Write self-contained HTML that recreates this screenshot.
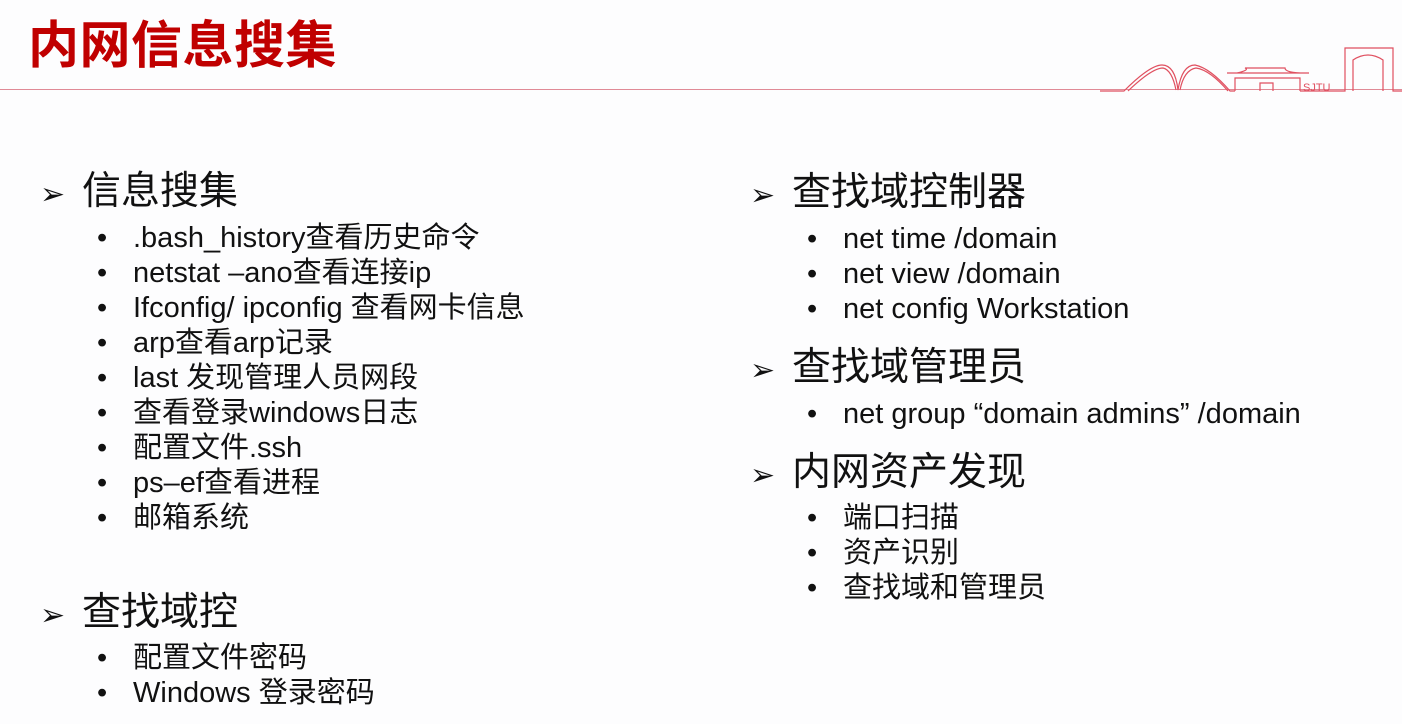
<!DOCTYPE html>
<html><head><meta charset="utf-8"><style>
body{margin:0;width:1402px;height:724px;background:#fdfdfe;position:relative;overflow:hidden;font-family:"Liberation Sans","Noto Sans CJK SC",sans-serif;color:#111}
.t{position:absolute;left:28px;top:4px;font-size:51px;font-weight:bold;color:#c00000;letter-spacing:0.5px;font-family:"Noto Sans CJK SC",sans-serif}
.hl{position:absolute;left:0;top:89px;width:1402px;height:1px;background:#e08a96}
.h{position:absolute;font-size:39px;line-height:44px;white-space:nowrap}
.h span{font-size:30px;display:inline-block;width:42px;font-family:"DejaVu Sans",sans-serif;font-weight:bold}
.i{position:absolute;font-size:29px;line-height:32px;white-space:nowrap}
.i b{position:absolute;left:-36px;font-weight:normal}
</style></head><body>
<div class="t">内网信息搜集</div>
<div class="hl"></div>
<svg style="position:absolute;left:1100px;top:30px" width="302" height="64" fill="none" stroke="#e05060" stroke-width="1.2">
<path d="M0 61H24Q50 35 62 35Q75 35 78 60Q82 35 95 35Q110 38 130 61H135"/>
<path d="M28 61Q52 38 63 38Q72 40 76 60M80 60Q84 40 96 38Q110 40 128 61"/>
<path d="M127 43H209M135 61V48H200V61M137 43Q150 40 145 38H185Q185 43 205 43M160 61V53H173V61"/>
<path d="M200 61H245V18H293V61H302M253 61V30Q268 20 283 30V61"/>
<text x="203" y="61" font-size="11" fill="#e05060" stroke="none" font-family="Liberation Sans">SJTU</text>
</svg>
<div class="h" style="left:40px;top:170px"><span>➢</span>信息搜集</div>
<div class="i" style="left:133px;top:222px"><b>•</b>.bash_history查看历史命令</div>
<div class="i" style="left:133px;top:257px"><b>•</b>netstat –ano查看连接ip</div>
<div class="i" style="left:133px;top:292px"><b>•</b>Ifconfig/ ipconfig 查看网卡信息</div>
<div class="i" style="left:133px;top:327px"><b>•</b>arp查看arp记录</div>
<div class="i" style="left:133px;top:362px"><b>•</b>last 发现管理人员网段</div>
<div class="i" style="left:133px;top:397px"><b>•</b>查看登录windows日志</div>
<div class="i" style="left:133px;top:432px"><b>•</b>配置文件.ssh</div>
<div class="i" style="left:133px;top:467px"><b>•</b>ps–ef查看进程</div>
<div class="i" style="left:133px;top:502px"><b>•</b>邮箱系统</div>
<div class="h" style="left:40px;top:591px"><span>➢</span>查找域控</div>
<div class="i" style="left:133px;top:642px"><b>•</b>配置文件密码</div>
<div class="i" style="left:133px;top:677px"><b>•</b>Windows 登录密码</div>
<div class="h" style="left:750px;top:171px"><span>➢</span>查找域控制器</div>
<div class="i" style="left:843px;top:223px"><b>•</b>net time /domain</div>
<div class="i" style="left:843px;top:258px"><b>•</b>net view /domain</div>
<div class="i" style="left:843px;top:293px"><b>•</b>net config Workstation</div>
<div class="h" style="left:750px;top:346px"><span>➢</span>查找域管理员</div>
<div class="i" style="left:843px;top:398px"><b>•</b>net group “domain admins” /domain</div>
<div class="h" style="left:750px;top:451px"><span>➢</span>内网资产发现</div>
<div class="i" style="left:843px;top:502px"><b>•</b>端口扫描</div>
<div class="i" style="left:843px;top:537px"><b>•</b>资产识别</div>
<div class="i" style="left:843px;top:572px"><b>•</b>查找域和管理员</div>
</body></html>
